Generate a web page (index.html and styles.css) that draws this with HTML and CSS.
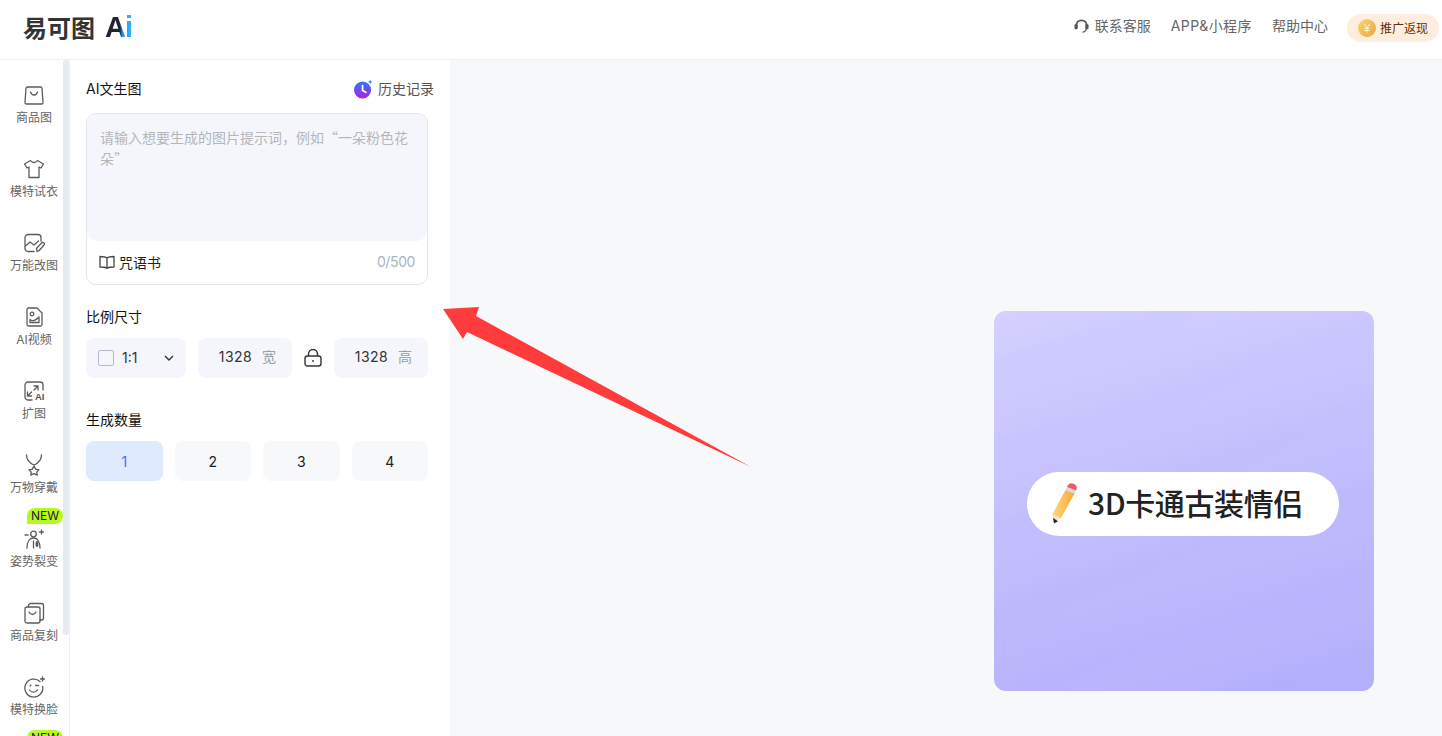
FILE: index.html
```html
<!DOCTYPE html>
<html lang="zh-CN">
<head>
<meta charset="utf-8">
<title>易可图 AI</title>
<link rel="stylesheet" href="styles.css">
</head>
<body>
<header class="topbar">
  <div class="logo"><span class="logo-cn">易可图</span><span class="logo-ai">Ai</span></div>
  <nav class="toplinks">
    <a class="toplink"><svg class="headset" viewBox="0 0 16 16"><path d="M2.500 7.500C2.500 4.200 5 2 8 2s5.500 2.200 5.500 5.500" fill="none" stroke="#555" stroke-width="2"/><rect x="0.500" y="6" width="3.500" height="5.500" rx="1.200" fill="#555"/><rect x="12" y="6" width="3.500" height="5.500" rx="1.200" fill="#555"/><path d="M13 11c0 2-2 3.500-4 3.500" fill="none" stroke="#555" stroke-width="1.400"/></svg>联系客服</a>
    <a class="toplink app-link">APP&amp;小程序</a>
    <a class="toplink">帮助中心</a>
    <a class="promo"><svg class="coin" viewBox="0 0 18 18"><defs><linearGradient id="coinfill" x1="0" y1="0" x2="1" y2="1"><stop offset="0" stop-color="#f9d67a"/><stop offset="1" stop-color="#eda53c"/></linearGradient></defs><circle cx="9" cy="9" r="9" fill="url(#coinfill)"/><path d="M6.200 5l2.800 4 2.800-4M9 9v4.500M6.500 9.500h5M6.500 11.500h5" fill="none" stroke="#fff3cf" stroke-width="1.100"/></svg>推广返现</a>
  </nav>
</header>

<div class="shell">
  <aside class="sidenav">
    <div class="scroll-thumb"></div>
    <a class="nav-item"><svg class="nav-icon" viewBox="0 0 22 22"><path d="M4.500 3h13a1.500 1.500 0 0 1 1.500 1.300l1 14a1.500 1.500 0 0 1-1.500 1.700h-15A1.500 1.500 0 0 1 2 18.300l1-14A1.500 1.500 0 0 1 4.500 3z"/><path d="M7.500 8c.8 2.200 2 3 3.500 3s2.700-.8 3.500-3"/></svg><span>商品图</span></a>
    <a class="nav-item"><svg class="nav-icon" viewBox="0 0 22 22"><path d="M7.500 2.500C8.500 4 9.500 4.500 11 4.500s2.500-.5 3.500-2L20.500 6 18 10l-2-1v10.500H6V9l-2 1L1.500 6z"/></svg><span>模特试衣</span></a>
    <a class="nav-item"><svg class="nav-icon" viewBox="0 0 22 22"><path d="M11 19.500H5a3 3 0 0 1-3-3v-11a3 3 0 0 1 3-3h10a3 3 0 0 1 3 3V9"/><path d="M2.500 14l4.500-4 4 3 4.500-4"/><path d="M14 19.500l-.5-3 5-5.500a1.600 1.600 0 0 1 2.500 2l-5 5.700z"/></svg><span>万能改图</span></a>
    <a class="nav-item"><svg class="nav-icon" viewBox="0 0 22 22"><path d="M5 2h9l5 5v11.500a1.500 1.500 0 0 1-1.500 1.500h-12A1.500 1.500 0 0 1 4 18.500v-15A1.500 1.500 0 0 1 5 2z"/><circle cx="9" cy="8" r="1.800"/><path d="M7 13.500c2 2 5 1.500 9-2.500v5.500H7z"/></svg><span>AI视频</span></a>
    <a class="nav-item"><svg class="nav-icon" viewBox="0 0 22 22"><path d="M9 20H5a3 3 0 0 1-3-3V5a3 3 0 0 1 3-3h12a3 3 0 0 1 3 3v5"/><path d="M11 6h4v4M15 6l-4 4M4.500 12v4h4M4.500 16l4-4"/><text class="nav-ai" x="12" y="20">AI</text></svg><span>扩图</span></a>
    <a class="nav-item"><svg class="nav-icon" viewBox="0 0 22 22"><path d="M3.500 1c0 5 3 8 7.500 10 4.500-2 7.500-5 7.500-10"/><path d="M11 12l1.900 3.400 3.100.4-2.300 2.300.6 3-3.300-1.500-3.300 1.500.6-3L6 15.800l3.100-.4z"/></svg><span>万物穿戴</span></a>
    <a class="nav-item"><span class="badge">NEW</span><svg class="nav-icon" viewBox="0 0 22 22"><circle cx="10.500" cy="6" r="2.800"/><path d="M4 20c0-6 2.500-10 6.500-10S17 14 17 20"/><path d="M10.500 13v7"/><path d="M18.500 2v4M16.500 4h4M2 7h3"/><ellipse cx="14" cy="16" rx="1.500" ry="3" class="nav-fill"/></svg><span>姿势裂变</span></a>
    <a class="nav-item"><svg class="nav-icon" viewBox="0 0 22 22"><rect x="2" y="5" width="15" height="16" rx="2"/><path d="M5.500 5V3.500A2 2 0 0 1 7.500 1.500h11a2 2 0 0 1 2 2V16a2 2 0 0 1-2 2H17"/><path d="M6 10c.8 1.700 2 2.500 3.500 2.500S12.200 11.700 13 10"/></svg><span>商品复刻</span></a>
    <a class="nav-item"><svg class="nav-icon" viewBox="0 0 22 22"><path d="M17 5.500a9 9 0 1 0 2.700 5"/><circle cx="7.500" cy="9.500" r="1" class="nav-fill"/><path d="M12.500 9.500h3M6.500 14c1 1.500 2.500 2.200 4 2.200s3-.7 4-2.200M19.500 1v4M17.500 3h4"/></svg><span>模特换脸</span></a>
    <a class="nav-item"><span class="badge">NEW</span></a>
  </aside>

  <section class="panel">
    <div class="panel-head">
      <h2 class="label">AI文生图</h2>
      <a class="history"><svg class="history-icon" viewBox="0 0 20 20"><defs><linearGradient id="histfill" x1="0.500" y1="0" x2="0.500" y2="1"><stop offset="0" stop-color="#2b7bf5"/><stop offset="1" stop-color="#b01fe0"/></linearGradient></defs><circle cx="9" cy="11" r="9" fill="url(#histfill)"/><path d="M9 6.500v5l3.500 2" fill="none" stroke="#fff" stroke-width="1.800" stroke-linecap="round"/><path d="M17 0l.7 1.800 1.800.7-1.800.7-.7 1.800-.7-1.800-1.800-.7 1.800-.7z" fill="#3a7bf2"/></svg>历史记录</a>
    </div>
    <div class="promptbox">
      <div class="prompt-input">请输入想要生成的图片提示词，例如“一朵粉色花朵”</div>
      <div class="prompt-foot">
        <a class="spellbook"><svg class="book" viewBox="0 0 16 16"><path d="M8 4C6.500 2.800 4 2.500 1 2.500v10.500c3 0 5.500.2 7 1.300 1.500-1.100 4-1.300 7-1.300V2.500c-3 0-5.500.3-7 1.500zM8 4v10"/></svg>咒语书</a>
        <span class="counter">0/500</span>
      </div>
    </div>

    <h2 class="label size-label">比例尺寸</h2>
    <div class="size-row">
      <div class="field ratio"><span class="ratio-box"></span><span class="ratio-text">1:1</span><svg class="chev" viewBox="0 0 10 6"><path d="M1 1l4 4 4-4"/></svg></div>
      <div class="field dim"><span class="dim-value">1328</span><span class="unit">宽</span></div>
      <svg class="lock" viewBox="0 0 18 18"><rect x="1" y="7" width="16" height="10" rx="2.500"/><path d="M4.500 7V5a4.500 4.500 0 0 1 9 0v2M9 11v2"/></svg>
      <div class="field dim"><span class="dim-value">1328</span><span class="unit">高</span></div>
    </div>

    <h2 class="label count-label">生成数量</h2>
    <div class="count-row">
      <button class="count active">1</button>
      <button class="count">2</button>
      <button class="count">3</button>
      <button class="count">4</button>
    </div>
  </section>

  <main class="stage">
    <div class="sample">
      <div class="sample-pill">
        <svg class="pencil" viewBox="0 0 26 42"><defs><linearGradient id="pencilbody" x1="0" y1="0" x2="1" y2="0"><stop offset="0" stop-color="#ffd77e"/><stop offset="1" stop-color="#f6a83a"/></linearGradient></defs><path d="M14.500 7l9 3.500L10 35l-7 3.500-1.500-7.500z" fill="url(#pencilbody)"/><path d="M1.500 31L3 38.500 10 35z" fill="#fbe3bd"/><path d="M2 35l1 5.500 4-2.300z" fill="#222"/><path d="M14.500 7l9 3.500 1.500-3-9-3.500z" fill="#d8d8d8"/><path d="M16 4l9 3.500 .8-2.500C26 2 23 .5 20.500 .3 18.300 .3 17 1.500 16 4z" fill="#ef5b6b"/></svg>
        <span class="sample-text">3D卡通古装情侣</span>
      </div>
    </div>
  </main>

  <svg class="arrow" viewBox="0 0 320 175"><path d="M0 12L36 10 33 19 308 170 24 35 20 42z" fill="#ff3b3b"/></svg>
</div>
</body>
</html>
```

FILE: styles.css
```css
* { box-sizing: border-box; }
html, body { margin: 0; height: 100%; overflow: hidden; }
body {
  font-family: Inter, "Noto Sans CJK SC", "Noto Sans", sans-serif;
  font-size: 14px;
  color: #111;
  background: #fff;
}
a { color: inherit; text-decoration: none; }

.topbar {
  height: 60px;
  display: flex;
  align-items: center;
  justify-content: space-between;
  padding: 0 3px 4px 23px;
  border-bottom: 1px solid #eeeff2;
}
.logo { display: flex; align-items: center; gap: 10px; padding-bottom: 2px; }
.logo-cn {
  font-family: "Noto Sans CJK SC", sans-serif;
  font-size: 24px;
  font-weight: 700;
  line-height: 28px;
  color: #333;
}
.logo-ai {
  font-family: "Liberation Sans", sans-serif;
  font-size: 29px;
  font-weight: 700;
  line-height: 28px;
  letter-spacing: -1px;
  background: linear-gradient(90deg, #1f2430 0%, #1f2430 55%, #1e8ff5 65%, #35b8fb 100%);
  -webkit-background-clip: text;
  background-clip: text;
  color: transparent;
}
.toplinks { display: flex; align-items: center; gap: 20px; }
.toplink { display: flex; align-items: center; gap: 6px; color: #666; line-height: 20px; padding-bottom: 4px; }
.app-link { letter-spacing: .45px; }
.headset { width: 15px; height: 16px; }
.promo {
  display: flex;
  align-items: center;
  gap: 4px;
  height: 28px;
  width: 92px;
  margin-left: -1px;
  padding-left: 11px;
  border-radius: 14px;
  background: #ffeedd;
  color: #6b2c00;
  font-size: 12px;
}
.coin { width: 18px; height: 18px; }

.shell { position: relative; display: flex; height: 676px; }

.sidenav {
  position: relative;
  width: 70px;
  flex: none;
  border-right: 1px solid #eeeff2;
  padding-top: 10px;
  overflow: hidden;
}
.scroll-thumb {
  position: absolute;
  top: 0;
  right: 0;
  width: 6px;
  height: 575px;
  border-radius: 3px;
  background: #e6e9f0;
}
.nav-item {
  position: relative;
  width: 64px;
  height: 74px;
  margin-left: 2px;
  padding-top: 14px;
  display: flex;
  flex-direction: column;
  align-items: center;
  gap: 3px;
  color: #666;
  font-size: 12px;
  line-height: 17px;
}
.nav-icon {
  width: 22px;
  height: 22px;
  flex: none;
  fill: none;
  stroke: #5c5c5c;
  stroke-width: 1.300;
  stroke-linejoin: round;
  stroke-linecap: round;
}
.nav-fill { fill: #5c5c5c; stroke: none; }
.nav-ai {
  font-family: "Liberation Sans", sans-serif;
  font-size: 9.500px;
  font-weight: 700;
  fill: #555;
  stroke: none;
}
.badge {
  position: absolute;
  top: -6px;
  left: 25px;
  width: 36px;
  height: 16px;
  border-radius: 8px 8px 8px 0;
  background: #b6f91f;
  color: #222;
  font-size: 12px;
  line-height: 16px;
  text-align: center;
}

.panel { width: 380px; flex: none; padding: 19px 22px 0 16px; background: #fff; }
.panel-head { display: flex; align-items: center; justify-content: space-between; height: 20px; margin-right: -6px; }
.label { margin: 0; font-size: 14px; font-weight: 400; line-height: 20px; height: 20px; color: #111; }
.history { display: flex; align-items: center; gap: 5px; color: #555; line-height: 18px; }
.history-icon { width: 19px; height: 20px; }

.promptbox {
  margin-top: 14px;
  height: 172px;
  border: 1px solid #e2e6ee;
  border-radius: 10px;
  display: flex;
  flex-direction: column;
}
.prompt-input {
  height: 127px;
  padding: 13px 13px;
  background: #f4f6fb;
  border-radius: 9px 9px 10px 10px;
  color: #b4b6bc;
  font-family: "Noto Sans CJK SC", sans-serif;
  line-height: 21px;
}
.prompt-foot {
  flex: 1;
  display: flex;
  align-items: center;
  justify-content: space-between;
  padding: 0 12px 2px;
}
.spellbook { display: flex; align-items: center; gap: 4px; color: #222; }
.book { width: 16px; height: 16px; fill: none; stroke: #444; stroke-width: 1.300; stroke-linejoin: round; }
.counter { color: #a9b4c4; letter-spacing: -.4px; }

.size-label { margin-top: 22px; }
.size-row { margin-top: 11px; display: flex; align-items: center; }
.field {
  height: 40px;
  display: flex;
  align-items: center;
  background: #f4f6fb;
  border-radius: 8px;
  line-height: 18px;
  padding-bottom: 2px;
}
.ratio { width: 100px; padding: 0 12px 0; margin-right: 12px; }
.ratio-box { width: 16px; height: 16px; border: 1px solid #b4bccb; border-radius: 2px; background: #f4f6fb; }
.ratio-text { margin-left: 8px; color: #333; flex: 1; }
.chev { width: 10px; height: 6px; fill: none; stroke: #333; stroke-width: 1.400; }
.dim { width: 94px; justify-content: flex-end; padding-right: 16px; gap: 10px; color: #333; }
.dim-value { letter-spacing: .4px; }
.unit { color: #9a9fa8; }
.lock { width: 18px; height: 18px; margin: 0 12px; fill: none; stroke: #333; stroke-width: 1.400; }

.count-label { margin-top: 32px; }
.count-row { margin-top: 11px; display: grid; grid-template-columns: repeat(4, 1fr); gap: 12px; }
.count {
  height: 40px;
  border: 0;
  border-radius: 8px;
  background: #f7f8fa;
  color: #222;
  font: inherit;
}
.count.active { background: #deeafe; color: #4a6cf7; }

.stage {
  flex: 1;
  background: #f7f8fa;
  display: flex;
  justify-content: flex-end;
  align-items: flex-end;
  padding: 0 68px 45px 0;
}
.sample {
  width: 380px;
  height: 380px;
  border-radius: 12px;
  background:
    repeating-linear-gradient(162deg, rgba(255,255,255,.015) 0 34px, rgba(120,120,240,.02) 52px, rgba(255,255,255,.015) 78px),
    linear-gradient(165deg, #d3d0ff 0%, #c2bdfd 48%, #b3aefb 100%);
  padding: 161px 35px 0 33px;
}
.sample-pill {
  height: 64px;
  border-radius: 32px;
  background: #fff;
  display: flex;
  align-items: center;
  padding-left: 23px;
  gap: 10px;
  font-family: "Noto Sans CJK SC", sans-serif;
  font-size: 30px;
  font-weight: 500;
  letter-spacing: -.4px;
  color: #222;
  white-space: nowrap;
}
.sample-text { padding-bottom: 4px; }
.pencil { width: 28px; height: 42px; flex: none; }

.arrow {
  position: absolute;
  left: 443px;
  top: 237px;
  width: 320px;
  height: 175px;
}
```
